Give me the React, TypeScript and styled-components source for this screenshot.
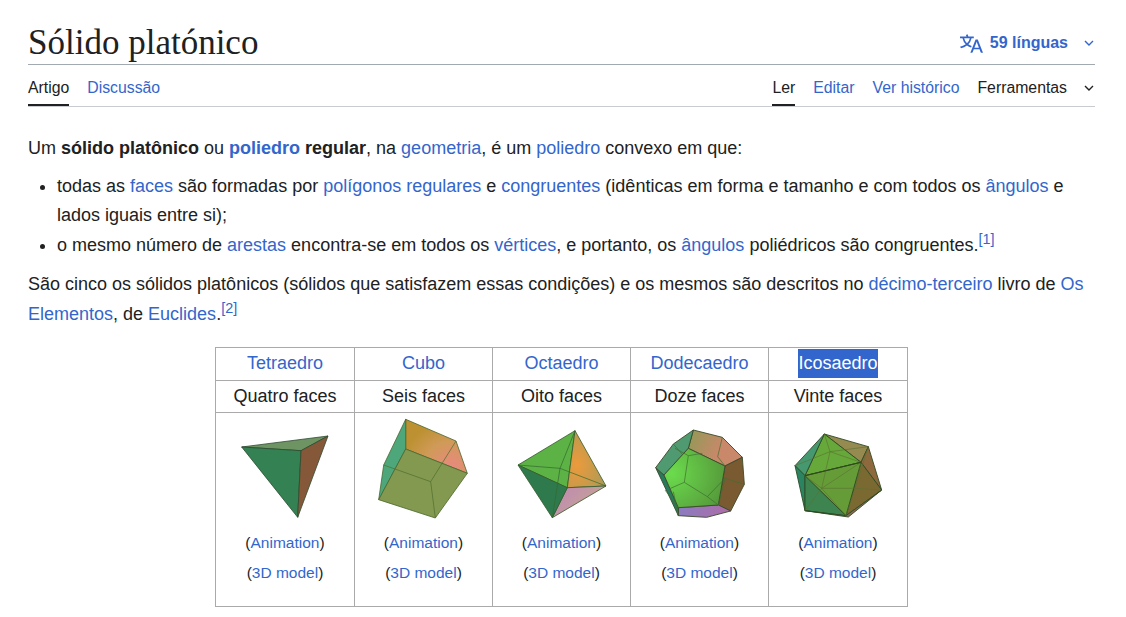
import React from "react";
import styled, { createGlobalStyle } from "styled-components";

const Global = createGlobalStyle`
  html, body { margin: 0; padding: 0; background: #fff; }
  body { font-family: "Liberation Sans", Arial, sans-serif; color: #202122; font-size: 18px; }
`;

const Page = styled.div`
  width: 1067px;
  margin-left: 28px;
  height: 617px;
  overflow: hidden;
`;

const TitleBar = styled.header`
  height: 64px;
  border-bottom: 1px solid #a2a9b1;
  display: flex;
  align-items: flex-end;
  justify-content: space-between;
`;

const Title = styled.h1`
  margin: 0;
  font-family: "Liberation Serif", Georgia, serif;
  font-weight: 400;
  font-size: 35px;
  line-height: 42px;
  color: #202122;
`;

const LangButton = styled.div`
  display: flex;
  align-items: center;
  color: #3366cc;
  font-weight: 700;
  font-size: 16px;
  height: 30px;
  margin-bottom: 6px;
  gap: 7px;
`;

const LangChevron = styled.span`
  display: flex;
  margin-left: 8px;
`;

const Tabs = styled.nav`
  height: 41px;
  border-bottom: 1px solid #c8ccd1;
  display: flex;
  justify-content: space-between;
  font-size: 15.8px;
`;

const TabGroup = styled.div`
  display: flex;
  gap: 18px;
`;

const Tab = styled.a<{ $active?: boolean; $plain?: boolean }>`
  display: flex;
  align-items: center;
  height: 41px;
  padding-top: 6px;
  box-sizing: border-box;
  color: ${(p) => (p.$active || p.$plain ? "#202122" : "#3366cc")};
  border-bottom: 2px solid ${(p) => (p.$active ? "#202122" : "transparent")};
`;

const ToolsChevron = styled.span`
  display: flex;
  margin-left: 16px;
`;

const Article = styled.main`
  padding-top: 27px;
  font-size: 18px;
  line-height: 29px;
`;

const Para = styled.p`
  margin: 0 0 9px;
`;

const List = styled.ul`
  margin: 0 0 10px;
  padding: 0 0 0 29px;
`;

const Item = styled.li`
  margin-bottom: 1px;
`;

const Link = styled.a`
  color: #3366cc;
`;

const Ref = styled.sup`
  color: #3366cc;
  font-size: 14.4px;
  line-height: 1;
`;

const ClosingLine = styled.span`
  display: inline-block;
  padding-top: 1px;
`;

const Table = styled.table`
  border-collapse: collapse;
  margin: 18px 0 0 187px;
  table-layout: fixed;
  width: 693px;
  text-align: center;
`;

const Column = styled.col<{ $w: number }>`
  width: ${(p) => p.$w}px;
`;

const Cell = styled.td<{ $h: number }>`
  border: 1px solid #aaaaaa;
  padding: 0 0 2px;
  height: ${(p) => p.$h - 2}px;
  line-height: 22px;
  vertical-align: middle;
`;

const Selected = styled.span`
  display: inline-block;
  background: #3366cc;
  color: #fff;
  line-height: 29px;
`;

const Figure = styled.td`
  border: 1px solid #aaaaaa;
  padding: 0;
  height: 193px;
  vertical-align: top;
`;

const Solid = styled.svg`
  display: block;
  width: 138px;
  height: 115px;
`;

const Caption = styled.div`
  font-size: 15.5px;
  line-height: 30px;
  color: #202122;
`;

const Chevron = ({ color }: { color: string }) => (
  <svg width="12" height="12" viewBox="0 0 12 12" fill="none" stroke={color} strokeWidth="1.4">
    <path d="M2 4l4 4 4-4" />
  </svg>
);

type Pt = [number, number];

const poly = (o: Pt, pts: number[]) => {
  const out: string[] = [];
  for (let i = 0; i < pts.length; i += 2) out.push(`${o[0] + pts[i] / 3},${o[1] + pts[i + 1] / 3}`);
  return out.join(" ");
};

const Thin = ({ o, d, color, w = 0.7 }: { o: Pt; d: number[][]; color: string; w?: number }) => (
  <g stroke={color} strokeWidth={w}>
    {d.map((p, i) => (
      <line key={i} x1={o[0] + p[0] / 3} y1={o[1] + p[1] / 3} x2={o[0] + p[2] / 3} y2={o[1] + p[3] / 3} />
    ))}
  </g>
);

const Tetra = () => (
  <Solid viewBox="216 413 138 115">
    <g stroke="#2c4a30" strokeWidth="0.8" strokeLinejoin="round">
      <polygon points="241.7,447 328,436 301,450.7" fill="#6f9464" />
      <polygon points="241.7,447 301,450.7 297.7,517.3" fill="#348253" />
      <polygon points="301,450.7 328,436 297.7,517.3" fill="#85583a" />
    </g>
  </Solid>
);

const Cube = () => (
  <Solid viewBox="355 413 138 115">
    <defs>
      <radialGradient id="cubeTop" cx="0.75" cy="0.85" r="0.8">
        <stop offset="0" stopColor="#e88a7d" />
        <stop offset="0.55" stopColor="#d09a58" />
        <stop offset="1" stopColor="#bd9132" />
      </radialGradient>
    </defs>
    <g stroke="#47662f" strokeWidth="0.8" strokeLinejoin="round">
      <polygon points="405.7,419.3 456,441 467.3,473.3 405.7,449" fill="url(#cubeTop)" />
      <polygon points="405.7,419.3 405.7,449 378.7,499.7 383.7,465" fill="#4ea77a" />
      <polygon points="405.7,449 467.3,473.3 435.3,518 378.7,499.7" fill="#83994f" />
    </g>
    <Thin o={[0, 0]} color="#4e6d30" d={[[1151,1395,1292,1445],[1292,1445,1306,1554],[1292,1445,1368,1323]]} />
  </Solid>
);

const Octa = () => (
  <Solid viewBox="493 413 138 115">
    <defs>
      <radialGradient id="octaO" cx="0.25" cy="0.6" r="0.85">
        <stop offset="0" stopColor="#ec9a3c" />
        <stop offset="1" stopColor="#a89a58" />
      </radialGradient>
      <linearGradient id="octaP" x1="0" y1="0" x2="1" y2="0.6">
        <stop offset="0" stopColor="#bd85b8" />
        <stop offset="1" stopColor="#c7a88e" />
      </linearGradient>
    </defs>
    <g stroke="#33592a" strokeWidth="0.8" strokeLinejoin="round">
      <polygon points="575,430.7 518,465 567.3,487.7" fill="#5cb245" />
      <polygon points="575,430.7 606,486 567.3,487.7" fill="url(#octaO)" />
      <polygon points="567.3,487.7 606,486 552.3,517.7" fill="url(#octaP)" />
      <polygon points="518,465 567.3,487.7 552.3,517.7" fill="#2f7a4d" />
    </g>
    <Thin o={[490, 410]} color="#33682f" d={[[84,165,210,175],[210,175,255,62],[210,175,348,228],[210,175,187,323]]} />
  </Solid>
);

const D: Pt = [645, 425];

const Dodeca = () => (
  <Solid viewBox="631 413 138 115">
    <defs>
      <radialGradient id="dodF" cx="0.12" cy="0.42" r="0.95">
        <stop offset="0" stopColor="#6bdc4d" />
        <stop offset="1" stopColor="#55963a" />
      </radialGradient>
      <linearGradient id="dodT" x1="0" y1="0" x2="1" y2="0.3">
        <stop offset="0" stopColor="#8f9a55" />
        <stop offset="0.7" stopColor="#c9886a" />
      </linearGradient>
      <linearGradient id="dodB" x1="0" y1="0" x2="1" y2="0">
        <stop offset="0" stopColor="#8a7cc0" />
        <stop offset="1" stopColor="#b06ca8" />
      </linearGradient>
    </defs>
    <g stroke="#3a4a2a" strokeWidth="0.9" strokeLinejoin="round">
      <polygon points={poly(D, [145,15,232,37,292,97,240,123,130,70])} fill="url(#dodT)" />
      <polygon points={poly(D, [292,97,298,178,257,258,220,240,240,123])} fill="#7a5a30" />
      <polygon points={poly(D, [100,248,220,240,257,258,185,277,100,272])} fill="url(#dodB)" />
      <polygon points={poly(D, [32,128,57,150,100,248,100,272])} fill="#287a5e" />
      <polygon points={poly(D, [85,57,145,15,130,70,57,150,32,128])} fill="#4f9a70" />
      <polygon points={poly(D, [130,70,240,123,220,240,100,248,57,150])} fill="url(#dodF)" />
    </g>
    <Thin o={D} color="#3f7030" d={[[130,92,118,172],[130,92,172,85],[130,92,90,70],[118,172,187,215],[187,215,240,160],[118,172,72,192],[187,215,220,240],[85,57,112,88],[232,37,218,95],[218,95,240,123],[240,160,298,178],[240,160,220,240],[60,195,100,248],[100,272,85,200]]} />
  </Solid>
);

const I: Pt = [785, 425];

const Icosa = () => (
  <Solid viewBox="769 413 138 115">
    <g stroke="#2f4a22" strokeWidth="0.9" strokeLinejoin="round">
      <polygon points={poly(I, [118,27,250,65,228,112])} fill="#958a50" />
      <polygon points={poly(I, [250,65,290,195,228,112])} fill="#8f693e" />
      <polygon points={poly(I, [228,112,290,195,183,272])} fill="#7a6a32" />
      <polygon points={poly(I, [118,27,228,112,60,152])} fill="#66a83a" />
      <polygon points={poly(I, [118,27,60,152,30,122])} fill="#469870" />
      <polygon points={poly(I, [30,122,60,152,60,257])} fill="#2a8462" />
      <polygon points={poly(I, [60,152,183,272,60,257])} fill="#3e8450" />
      <polygon points={poly(I, [60,152,228,112,183,272])} fill="#659c38" />
      <polygon points={poly(I, [60,257,183,272,290,195,190,276])} fill="#8a6a55" />
    </g>
    <Thin o={I} color="#5a7030" w={0.6} d={[[118,27,135,80],[135,80,30,122],[135,80,250,65],[135,80,228,112],[135,80,110,190],[110,190,60,152],[110,190,228,112],[110,190,183,272],[110,190,60,257],[250,65,210,190],[210,190,183,272],[210,190,290,195],[210,190,110,190],[210,190,228,112]]} />
    <line x1={I[0] + 60 / 3} y1={I[1] + 152 / 3} x2={I[0] + 228 / 3} y2={I[1] + 112 / 3} stroke="#2f4a1a" strokeWidth="1.1" />
  </Solid>
);

const solids = [Tetra, Cube, Octa, Dodeca, Icosa];
const widths = [139, 138, 138, 138, 139];

export default function App() {
  return (
    <Page>
      <Global />
      <TitleBar>
        <Title>Sólido platónico</Title>
        <LangButton>
          <svg width="23" height="23" viewBox="0 0 20 20" fill="#3366cc">
            <path d="M20 18h-1.44a.6.6 0 0 1-.4-.12.8.8 0 0 1-.23-.31L17 15h-5l-1 2.54a.8.8 0 0 1-.22.3.6.6 0 0 1-.4.14H9l4.55-11.47h1.89zm-3.53-4.31L14.89 9.5a12 12 0 0 1-.39-1.24q-.09.37-.19.69l-.19.56-1.58 4.19zm-6.3-1.58a13.4 13.4 0 0 1-2.91-1.41 11.46 11.46 0 0 0 2.81-5.37H12V4H7.31a4 4 0 0 0-.2-.56C6.87 2.79 6.6 2 6.6 2l-1.47.5s.4.89.6 1.5H0v1.33h2.15A11.23 11.23 0 0 0 5 10.7a17.2 17.2 0 0 1-5 2.1q.56.82.87 1.38a23.3 23.3 0 0 0 5.22-2.51 15.6 15.6 0 0 0 3.56 1.77zM3.63 5.33h4.91a8.1 8.1 0 0 1-2.45 4.45 9.1 9.1 0 0 1-2.46-4.45" />
          </svg>
          <span>59 línguas</span>
          <LangChevron><Chevron color="#3366cc" /></LangChevron>
        </LangButton>
      </TitleBar>
      <Tabs>
        <TabGroup>
          <Tab $active>Artigo</Tab>
          <Tab>Discussão</Tab>
        </TabGroup>
        <TabGroup>
          <Tab $active>Ler</Tab>
          <Tab>Editar</Tab>
          <Tab>Ver histórico</Tab>
          <Tab $plain>Ferramentas<ToolsChevron><Chevron color="#202122" /></ToolsChevron></Tab>
        </TabGroup>
      </Tabs>
      <Article>
        <Para>
          Um <b>sólido platônico</b> ou <Link><b>poliedro</b></Link> <b>regular</b>, na <Link>geometria</Link>, é um <Link>poliedro</Link> convexo em que:
        </Para>
        <List>
          <Item>todas as <Link>faces</Link> são formadas por <Link>polígonos regulares</Link> e <Link>congruentes</Link> (idênticas em forma e tamanho e com todos os <Link>ângulos</Link> e lados iguais entre si);</Item>
          <Item>o mesmo número de <Link>arestas</Link> encontra-se em todos os <Link>vértices</Link>, e portanto, os <Link>ângulos</Link> poliédricos são congruentes.<Ref>[1]</Ref></Item>
        </List>
        <Para>
          São cinco os sólidos platônicos (sólidos que satisfazem essas condições) e os mesmos são descritos no <Link>décimo-terceiro</Link> livro de <Link>Os</Link> <ClosingLine><Link>Elementos</Link>, de <Link>Euclides</Link>.<Ref>[2]</Ref></ClosingLine>
        </Para>
        <Table>
          <colgroup>
            {widths.map((w, i) => <Column key={i} $w={w} />)}
          </colgroup>
          <tbody>
            <tr>
              <Cell $h={32}><Link>Tetraedro</Link></Cell>
              <Cell $h={32}><Link>Cubo</Link></Cell>
              <Cell $h={32}><Link>Octaedro</Link></Cell>
              <Cell $h={32}><Link>Dodecaedro</Link></Cell>
              <Cell $h={32}><Selected>Icosaedro</Selected></Cell>
            </tr>
            <tr>
              {["Quatro faces", "Seis faces", "Oito faces", "Doze faces", "Vinte faces"].map((t) => (
                <Cell $h={31} key={t}>{t}</Cell>
              ))}
            </tr>
            <tr>
              {solids.map((S, i) => (
                <Figure key={i}>
                  <S />
                  <Caption>(<Link>Animation</Link>)</Caption>
                  <Caption>(<Link>3D model</Link>)</Caption>
                </Figure>
              ))}
            </tr>
          </tbody>
        </Table>
      </Article>
    </Page>
  );
}
